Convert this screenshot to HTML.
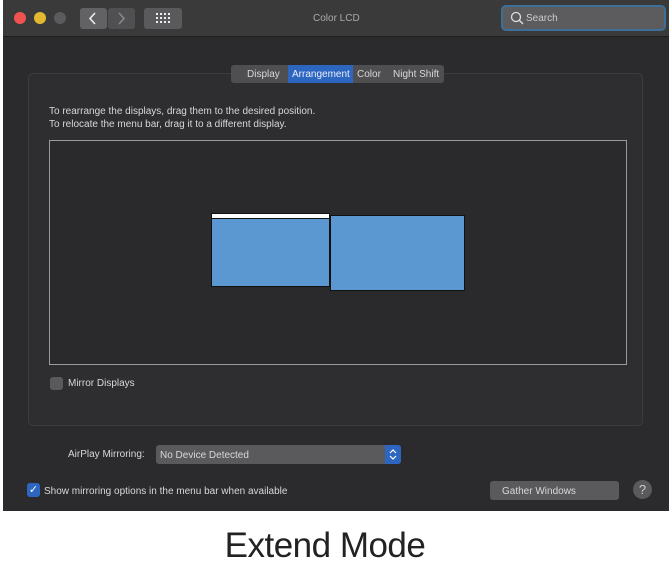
<!DOCTYPE html>
<html><head><style>
*{margin:0;padding:0;box-sizing:border-box}
body{width:672px;height:564px;background:#fff;position:relative;overflow:hidden;font-family:"Liberation Sans",sans-serif}
.win{position:absolute;left:3px;top:0;width:666px;height:511px;background:#2b2b2d}
.tb{position:absolute;left:0;top:0;width:666px;height:37px;background:#3a3a3b;border-bottom:1px solid #1e1e1e}
.dot{position:absolute;top:12px;width:12px;height:12px;border-radius:50%}
.a{position:absolute}
.t{position:absolute;color:#d8d8d8;font-size:10px;white-space:nowrap}
</style></head><body>
<div class="win">
 <div class="tb">
  <div class="dot" style="left:11px;background:#ef5350"></div>
  <div class="dot" style="left:31px;background:#e2b830"></div>
  <div class="dot" style="left:51px;background:#5b5b5d"></div>
  <div class="a" style="left:77px;top:8px;width:27px;height:21px;background:#626264;border-radius:3px"></div>
  <svg class="a" style="left:85px;top:12px" width="10" height="13"><path d="M7 1L2 6.5L7 12" stroke="#eee" stroke-width="1.6" fill="none"/></svg>
  <div class="a" style="left:105px;top:8px;width:27px;height:21px;background:#505052;border-radius:3px"></div>
  <svg class="a" style="left:114px;top:12px" width="10" height="13"><path d="M2 1L7 6.5L2 12" stroke="#888" stroke-width="1.6" fill="none"/></svg>
  <div class="a" style="left:141px;top:8px;width:38px;height:21px;background:#5a5a5c;border-radius:3px"></div>
  <svg class="a" style="left:152px;top:12px" width="16" height="13"><g fill="#eee"><rect x="1" y="1" width="2" height="2"/><rect x="5" y="1" width="2" height="2"/><rect x="9" y="1" width="2" height="2"/><rect x="13" y="1" width="2" height="2"/><rect x="1" y="5" width="2" height="2"/><rect x="5" y="5" width="2" height="2"/><rect x="9" y="5" width="2" height="2"/><rect x="13" y="5" width="2" height="2"/><rect x="1" y="9" width="2" height="2"/><rect x="5" y="9" width="2" height="2"/><rect x="9" y="9" width="2" height="2"/><rect x="13" y="9" width="2" height="2"/></g></svg>
  <div class="t" style="left:310px;top:13px;color:#aaa">Color LCD</div>
  <div class="a" style="left:498px;top:5px;width:165px;height:26px;border:2px solid #3d6f99;border-radius:5px;background:#5c5c5e"></div>
  <svg class="a" style="left:507px;top:11px" width="14" height="14"><circle cx="6" cy="6" r="4.5" stroke="#ddd" stroke-width="1.3" fill="none"/><line x1="9.3" y1="9.3" x2="13" y2="13" stroke="#ddd" stroke-width="1.4"/></svg>
  <div class="t" style="left:523px;top:13px;color:#ccc">Search</div>
 </div>
 <div class="a" style="left:25px;top:73px;width:615px;height:353px;border:1px solid #3c3c3e;border-radius:5px;background:#2e2e30"></div>
 <div class="a" style="left:228px;top:65px;width:213px;height:18px;background:#4f4f51;border-radius:3px"></div>
 <div class="a" style="left:285px;top:65px;width:65px;height:18px;background:#2d66c0"></div>
 <div class="t" style="left:244px;top:69px">Display</div>
 <div class="t" style="left:289px;top:69px;color:#e8eefa">Arrangement</div>
 <div class="t" style="left:354px;top:69px">Color</div>
 <div class="t" style="left:390px;top:69px">Night Shift</div>
 <div class="t" style="left:46px;top:106px">To rearrange the displays, drag them to the desired position.</div>
 <div class="t" style="left:46px;top:119px">To relocate the menu bar, drag it to a different display.</div>
 <div class="a" style="left:46px;top:140px;width:578px;height:225px;border:1px solid #9a9a9a;background:#2a2a2c"></div>
 <div class="a" style="left:208px;top:213px;width:119px;height:74px;background:#5b97d0;border:1px solid #111"></div>
 <div class="a" style="left:208px;top:213px;width:119px;height:6px;background:#fff;border:1px solid #111"></div>
 <div class="a" style="left:327px;top:215px;width:135px;height:76px;background:#5b97d0;border:1px solid #111"></div>
 <div class="a" style="left:47px;top:377px;width:13px;height:13px;background:#5a5a5c;border-radius:3px"></div>
 <div class="t" style="left:65px;top:378px">Mirror Displays</div>
 <div class="t" style="left:65px;top:449px">AirPlay Mirroring:</div>
 <div class="a" style="left:153px;top:445px;width:245px;height:19px;background:#5a5a5c;border-radius:3px"></div>
 <div class="a" style="left:382px;top:445px;width:16px;height:19px;background:#2d66c0;border-radius:0 3px 3px 0"></div>
 <svg class="a" style="left:385px;top:447px" width="10" height="15"><path d="M2 6L5 3L8 6M2 9L5 12L8 9" stroke="#fff" stroke-width="1.2" fill="none"/></svg>
 <div class="t" style="left:157px;top:450px">No Device Detected</div>
 <div class="a" style="left:24px;top:483px;width:13px;height:14px;background:#2d66c0;border-radius:3px;color:#fff;font-size:11px;text-align:center;line-height:14px">✓</div>
 <div class="t" style="left:41px;top:486px">Show mirroring options in the menu bar when available</div>
 <div class="a" style="left:487px;top:481px;width:129px;height:19px;background:#5a5a5c;border-radius:3px"></div>
 <div class="t" style="left:499px;top:486px">Gather Windows</div>
 <div class="a" style="left:630px;top:480px;width:19px;height:19px;border-radius:50%;background:#5a5a5c;color:#ccc;font-size:13px;text-align:center;line-height:19px">?</div>
</div>
<div class="a" style="left:0;top:526px;width:650px;text-align:center;font-size:35px;color:#222;letter-spacing:-0.5px">Extend Mode</div>
</body></html>
